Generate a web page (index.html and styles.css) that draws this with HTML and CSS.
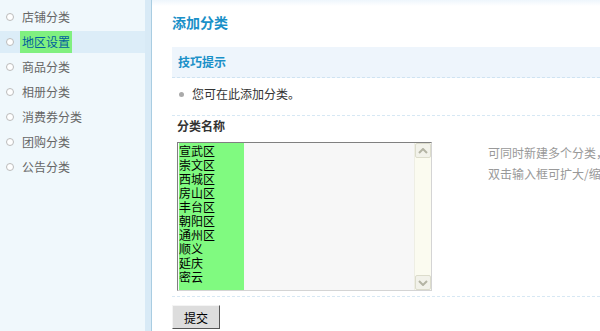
FILE: index.html
```html
<!DOCTYPE html>
<html lang="zh-CN">
<head>
    <meta charset="UTF-8">
    <title>添加分类</title>
    <link rel="stylesheet" href="styles.css">
</head>
<body>
<div class="sidebar">
    <ul class="menu">
        <li><i></i><span>店铺分类</span></li>
        <li class="active"><i></i><span>地区设置</span></li>
        <li><i></i><span>商品分类</span></li>
        <li><i></i><span>相册分类</span></li>
        <li><i></i><span>消费券分类</span></li>
        <li><i></i><span>团购分类</span></li>
        <li><i></i><span>公告分类</span></li>
    </ul>
</div>
<div class="divider"></div>
<div class="main">
    <h2>添加分类</h2>
    <div class="tip-head">技巧提示</div>
    <ul class="tip-list">
        <li>您可在此添加分类。</li>
    </ul>
    <form class="form">
        <div class="label">分类名称</div>
        <div class="row">
            <div class="area">
                <div class="area-text">
                    <div class="sel">
                        <div>宣武区</div>
                        <div>崇文区</div>
                        <div>西城区</div>
                        <div>房山区</div>
                        <div>丰台区</div>
                        <div>朝阳区</div>
                        <div>通州区</div>
                        <div>顺义</div>
                        <div>延庆</div>
                        <div>密云</div>
                    </div>
                </div>
                <div class="scroll">
                    <div class="arrow"><svg width="10" height="6" viewBox="0 0 10 6"><path d="M1 5 L5 1 L9 5" fill="none" stroke="#b4b4a4" stroke-width="2"/></svg></div>
                    <div class="track"></div>
                    <div class="arrow"><svg width="10" height="6" viewBox="0 0 10 6"><path d="M1 1 L5 5 L9 1" fill="none" stroke="#b4b4a4" stroke-width="2"/></svg></div>
                </div>
            </div>
            <div class="hint">
                <p>可同时新建多个分类，每行一个</p>
                <p>双击输入框可扩大/缩小</p>
            </div>
        </div>
        <div class="submit-row">
            <button type="button" class="btn">提交</button>
        </div>
    </form>
</div>
</body>
</html>
```

FILE: styles.css
```css
* {
    margin: 0;
    padding: 0;
}

ul {
    list-style: none;
}

body {
    height: 331px;
    overflow: hidden;
    display: flex;
    font-family: "Noto Sans CJK SC", sans-serif;
    font-size: 12px;
    color: #333;
    background: #fff;
}

.sidebar {
    width: 145px;
    flex-shrink: 0;
    background: #f0f8fc;
}

.menu {
    padding-top: 6px;
}

.menu li {
    height: 22px;
    margin-bottom: 3px;
    display: flex;
    align-items: center;
    padding-left: 6px;
    color: #666;
}

.menu li i {
    width: 6px;
    height: 6px;
    border: 1px solid #bbb;
    border-radius: 50%;
    background: #fff;
    margin-right: 6px;
}

.menu li span {
    line-height: 22px;
    padding: 0 2px;
}

.menu li.active {
    background: #dcedf8;
}

.menu li.active span {
    background: #80f080;
    color: #00609c;
}

.divider {
    width: 6px;
    flex-shrink: 0;
    background: #d8eaf6;
    border-right: 1px solid #a9cde2;
}

.main {
    flex: 1;
    min-width: 0;
    padding: 12px 0 0 20px;
    background: linear-gradient(#eef6fc, #fff 6px);
    overflow: hidden;
}

h2 {
    font-size: 14px;
    line-height: 20px;
    color: #1a90c8;
    margin-bottom: 15px;
}

.tip-head {
    height: 30px;
    line-height: 30px;
    padding-left: 6px;
    background: #eef5fc;
    border-bottom: 1px dashed #cfe3f2;
    font-weight: bold;
    color: #1a90c8;
}

.tip-list {
    padding: 6px 0 11px 7px;
}

.tip-list li {
    line-height: 20px;
    display: flex;
    align-items: center;
}

.tip-list li::before {
    content: "";
    width: 5px;
    height: 5px;
    border-radius: 50%;
    background: #aaa;
    margin-right: 8px;
}

.form {
    border-top: 1px dashed #d7e8f4;
}

.label {
    line-height: 20px;
    padding-left: 5px;
    font-weight: bold;
}

.row {
    display: flex;
    padding: 6px 0 5px 5px;
    border-bottom: 1px dashed #d7e8f4;
}

.area {
    width: 255px;
    height: 149px;
    box-sizing: border-box;
    border: 1px solid;
    border-color: #808080 #d4d4d4 #d4d4d4 #808080;
    background: #f7f7f7;
    display: flex;
    flex-shrink: 0;
}

.area-text {
    flex: 1;
    padding-left: 1px;
}

.sel {
    width: 65px;
    height: 100%;
    padding-top: 1px;
    box-sizing: border-box;
    background: #80fa80;
    color: #000;
    font-size: 12px;
    line-height: 14px;
}

.scroll {
    width: 16px;
    display: flex;
    flex-direction: column;
    background: #fbfbf0;
    border-left: 1px solid #eeeee4;
}

.scroll .track {
    flex: 1;
}

.arrow {
    height: 15px;
    box-sizing: border-box;
    border: 1px solid #dcdccc;
    border-radius: 2px;
    background: #f2f2ea;
    display: flex;
    align-items: center;
    justify-content: center;
}

.hint {
    margin-left: 56px;
    white-space: nowrap;
    color: #999;
    line-height: 21px;
}

.submit-row {
    padding-top: 8px;
}

.btn {
    width: 48px;
    height: 24px;
    background: #ddd;
    border: 1px solid;
    border-color: #f4f4f4 #555 #555 #f4f4f4;
    font-family: "Noto Sans CJK SC", sans-serif;
    font-size: 12px;
    color: #000;
}
```
